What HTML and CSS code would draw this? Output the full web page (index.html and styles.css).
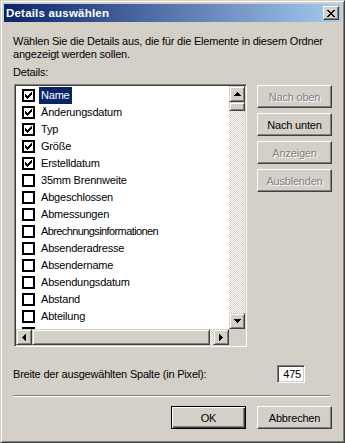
FILE: index.html
```html
<!DOCTYPE html>
<html lang="de">
<head>
<meta charset="utf-8">
<title>Details auswählen</title>
<link rel="stylesheet" href="styles.css">
</head>
<body>
<div class="window">
  <div class="titlebar">
    <span class="title">Details auswählen</span>
    <span class="close"><svg width="8" height="7" viewBox="0 0 8 7" shape-rendering="crispEdges"><path fill="#000" d="M0 0h2v1H0zM6 0h2v1H6zM1 1h2v1H1zM5 1h2v1H5zM2 2h4v1H2zM3 3h2v1H3zM2 4h4v1H2zM1 5h2v1H1zM5 5h2v1H5zM0 6h2v1H0zM6 6h2v1H6z"/></svg></span>
  </div>
  <div class="content">
    <p class="desc"><span class="line">Wählen Sie die Details aus, die für die Elemente in diesem Ordner</span><br><span class="line">angezeigt werden sollen.</span></p>
    <p class="label">Details:</p>
    <div class="main">
      <div class="listbox">
        <div class="items">
          <div class="row"><span class="cb"><svg class="chk" width="7" height="7" viewBox="0 0 7 7" shape-rendering="crispEdges"><path fill="#000" d="M6 0h1v1H6zM5 1h2v1H5zM0 2h1v1H0zM4 2h3v1H4zM0 3h2v1H0zM3 3h3v1H3zM0 4h5v1H0zM1 5h3v1H1zM2 6h1v1H2z"/></svg></span><span class="txt sel">Name</span></div>
          <div class="row"><span class="cb"><svg class="chk" width="7" height="7" viewBox="0 0 7 7" shape-rendering="crispEdges"><path fill="#000" d="M6 0h1v1H6zM5 1h2v1H5zM0 2h1v1H0zM4 2h3v1H4zM0 3h2v1H0zM3 3h3v1H3zM0 4h5v1H0zM1 5h3v1H1zM2 6h1v1H2z"/></svg></span><span class="txt">Änderungsdatum</span></div>
          <div class="row"><span class="cb"><svg class="chk" width="7" height="7" viewBox="0 0 7 7" shape-rendering="crispEdges"><path fill="#000" d="M6 0h1v1H6zM5 1h2v1H5zM0 2h1v1H0zM4 2h3v1H4zM0 3h2v1H0zM3 3h3v1H3zM0 4h5v1H0zM1 5h3v1H1zM2 6h1v1H2z"/></svg></span><span class="txt">Typ</span></div>
          <div class="row"><span class="cb"><svg class="chk" width="7" height="7" viewBox="0 0 7 7" shape-rendering="crispEdges"><path fill="#000" d="M6 0h1v1H6zM5 1h2v1H5zM0 2h1v1H0zM4 2h3v1H4zM0 3h2v1H0zM3 3h3v1H3zM0 4h5v1H0zM1 5h3v1H1zM2 6h1v1H2z"/></svg></span><span class="txt">Größe</span></div>
          <div class="row"><span class="cb"><svg class="chk" width="7" height="7" viewBox="0 0 7 7" shape-rendering="crispEdges"><path fill="#000" d="M6 0h1v1H6zM5 1h2v1H5zM0 2h1v1H0zM4 2h3v1H4zM0 3h2v1H0zM3 3h3v1H3zM0 4h5v1H0zM1 5h3v1H1zM2 6h1v1H2z"/></svg></span><span class="txt">Erstelldatum</span></div>
          <div class="row"><span class="cb"></span><span class="txt">35mm Brennweite</span></div>
          <div class="row"><span class="cb"></span><span class="txt">Abgeschlossen</span></div>
          <div class="row"><span class="cb"></span><span class="txt">Abmessungen</span></div>
          <div class="row"><span class="cb"></span><span class="txt narrow">Abrechnungsinformationen</span></div>
          <div class="row"><span class="cb"></span><span class="txt">Absenderadresse</span></div>
          <div class="row"><span class="cb"></span><span class="txt">Absendername</span></div>
          <div class="row"><span class="cb"></span><span class="txt">Absendungsdatum</span></div>
          <div class="row"><span class="cb"></span><span class="txt">Abstand</span></div>
          <div class="row"><span class="cb"></span><span class="txt">Abteilung</span></div>
          <div class="row"><span class="cb"></span></div>
        </div>
        <div class="vscroll">
          <span class="sbtn"><svg width="7" height="4" viewBox="0 0 7 4" shape-rendering="crispEdges"><path fill="#000" d="M3 0h1v1H3zM2 1h3v1H2zM1 2h5v1H1zM0 3h7v1H0z"/></svg></span>
          <span class="thumb vthumb"></span>
          <span class="track"></span>
          <span class="sbtn"><svg width="7" height="4" viewBox="0 0 7 4" shape-rendering="crispEdges"><path fill="#000" d="M0 0h7v1H0zM1 1h5v1H1zM2 2h3v1H2zM3 3h1v1H3z"/></svg></span>
        </div>
        <div class="hscroll">
          <span class="sbtn"><svg width="4" height="7" viewBox="0 0 4 7" shape-rendering="crispEdges"><path fill="#000" d="M3 0h1v7H3zM2 1h1v5H2zM1 2h1v3H1zM0 3h1v1H0z"/></svg></span>
          <span class="thumb hthumb"></span>
          <span class="track"></span>
          <span class="sbtn"><svg width="4" height="7" viewBox="0 0 4 7" shape-rendering="crispEdges"><path fill="#000" d="M0 0h1v7H0zM1 1h1v5H1zM2 2h1v3H2zM3 3h1v1H3z"/></svg></span>
        </div>
        <div class="corner"></div>
      </div>
      <div class="sidebtns">
        <div class="btn disabled">Nach oben</div>
        <div class="btn">Nach unten</div>
        <div class="btn disabled">Anzeigen</div>
        <div class="btn disabled">Ausblenden</div>
      </div>
    </div>
    <div class="widthrow">
      <span class="wlabel">Breite der ausgewählten Spalte (in Pixel):</span>
      <span class="edit">475</span>
    </div>
    <div class="sep"></div>
    <div class="footer">
      <div class="btn default">OK</div>
      <div class="btn">Abbrechen</div>
    </div>
  </div>
</div>
</body>
</html>
```

FILE: styles.css
```css
* { box-sizing: border-box; }
html, body { margin: 0; padding: 0; }
body {
  width: 345px;
  height: 443px;
  background: #d4d0c8;
  font-family: "Liberation Sans", Arial, sans-serif;
  font-size: 11px;
  letter-spacing: -0.2px;
  color: #000;
}
.window {
  width: 345px;
  height: 443px;
  border: 1px solid;
  border-color: #d4d0c8 #404040 #404040 #d4d0c8;
  box-shadow: inset 1px 1px #fff, inset -1px -1px #808080;
  padding: 3px;
  display: flex;
  flex-direction: column;
  background: #d4d0c8;
}
.titlebar {
  height: 18px;
  flex: none;
  background: linear-gradient(to right, #0a246a, #a6caf0);
  display: flex;
  align-items: center;
  justify-content: space-between;
  padding: 0 2px 0 2px;
}
.title {
  color: #fff;
  font-weight: bold;
  font-size: 11.5px;
  letter-spacing: 0.2px;
  line-height: 18px;
}
.close {
  width: 16px;
  height: 14px;
  background: #d4d0c8;
  border: 1px solid;
  border-color: #fff #404040 #404040 #fff;
  box-shadow: inset -1px -1px #808080;
  display: flex;
  align-items: center;
  justify-content: center;
}
.close svg { display: block; }
.content {
  padding: 0 9px 0 10px;
}
.desc {
  margin: 13px 0 0 -1px;
  line-height: 13px;
  white-space: nowrap;
}
.label {
  margin: 5px 0 0 -1px;
  line-height: 13px;
}
.main {
  display: flex;
  gap: 10px;
  margin-top: 5px;
}
.listbox {
  width: 233px;
  height: 263px;
  border: 1px solid;
  border-color: #808080 #fff #fff #808080;
  padding: 1px;
  box-shadow: inset 1px 1px #404040, inset -1px -1px #d4d0c8;
  display: grid;
  grid-template-columns: 213px 16px;
  grid-template-rows: 243px 16px;
  background: #fff;
}
.items {
  overflow: hidden;
  padding-top: 1px;
  background: #fff;
}
.row {
  height: 17px;
  display: flex;
  align-items: center;
  padding-left: 6px;
  white-space: nowrap;
}
.cb {
  width: 13px;
  height: 13px;
  flex: none;
  border: 2px solid #000;
  background: #fff;
  margin-right: 4px;
  display: flex;
  align-items: center;
  justify-content: center;
}
.cb svg { display: block; }
.txt {
  padding: 0 2px;
  line-height: 17px;
}
.txt.narrow { letter-spacing: -0.6px; }
.sel {
  background: #0a246a;
  color: #fff;
}
.vscroll {
  display: flex;
  flex-direction: column;
}
.hscroll {
  display: flex;
}
.sbtn, .thumb {
  flex: none;
  background: #d4d0c8;
  border: 1px solid;
  border-color: #d4d0c8 #404040 #404040 #d4d0c8;
  box-shadow: inset 1px 1px #fff, inset -1px -1px #808080;
}
.sbtn {
  width: 16px;
  height: 16px;
  display: flex;
  align-items: center;
  justify-content: center;
}
.sbtn svg { display: block; }
.vthumb { height: 9px; width: 16px; }
.hthumb { width: 178px; height: 16px; }
.track {
  flex: 1;
  background-color: #fff;
  background-image: repeating-conic-gradient(#d4d0c8 0 25%, #fff 0 50%);
  background-size: 2px 2px;
}
.corner { background: #d4d0c8; }
.sidebtns {
  display: flex;
  flex-direction: column;
  gap: 5px;
  margin-top: 1px;
}
.btn {
  width: 75px;
  height: 23px;
  display: flex;
  align-items: center;
  justify-content: center;
  background: #d4d0c8;
  border: 1px solid;
  border-color: #fff #404040 #404040 #fff;
  box-shadow: inset -1px -1px #808080;
  color: #000;
}
.btn.disabled {
  color: #808080;
  text-shadow: 1px 1px #fff;
}
.btn.default {
  border-color: #000;
  box-shadow: inset 1px 1px #fff, inset -1px -1px #404040, inset -2px -2px #808080;
}
.widthrow {
  display: flex;
  align-items: center;
  margin-top: 18px;
}
.wlabel { margin-left: -1px; }
.edit {
  margin-left: auto;
  margin-right: 27px;
  width: 28px;
  height: 18px;
  border: 1px solid;
  border-color: #808080 #fff #fff #808080;
  box-shadow: inset 1px 1px #404040, inset -1px -1px #d4d0c8;
  background: #fff;
  text-align: right;
  padding-right: 3px;
  line-height: 16px;
}
.sep {
  margin: 12px 2px 0 -1px;
  height: 2px;
  border-top: 1px solid #808080;
  border-bottom: 1px solid #fff;
}
.footer {
  display: flex;
  justify-content: flex-end;
  gap: 11px;
  margin-top: 9px;
}
```
